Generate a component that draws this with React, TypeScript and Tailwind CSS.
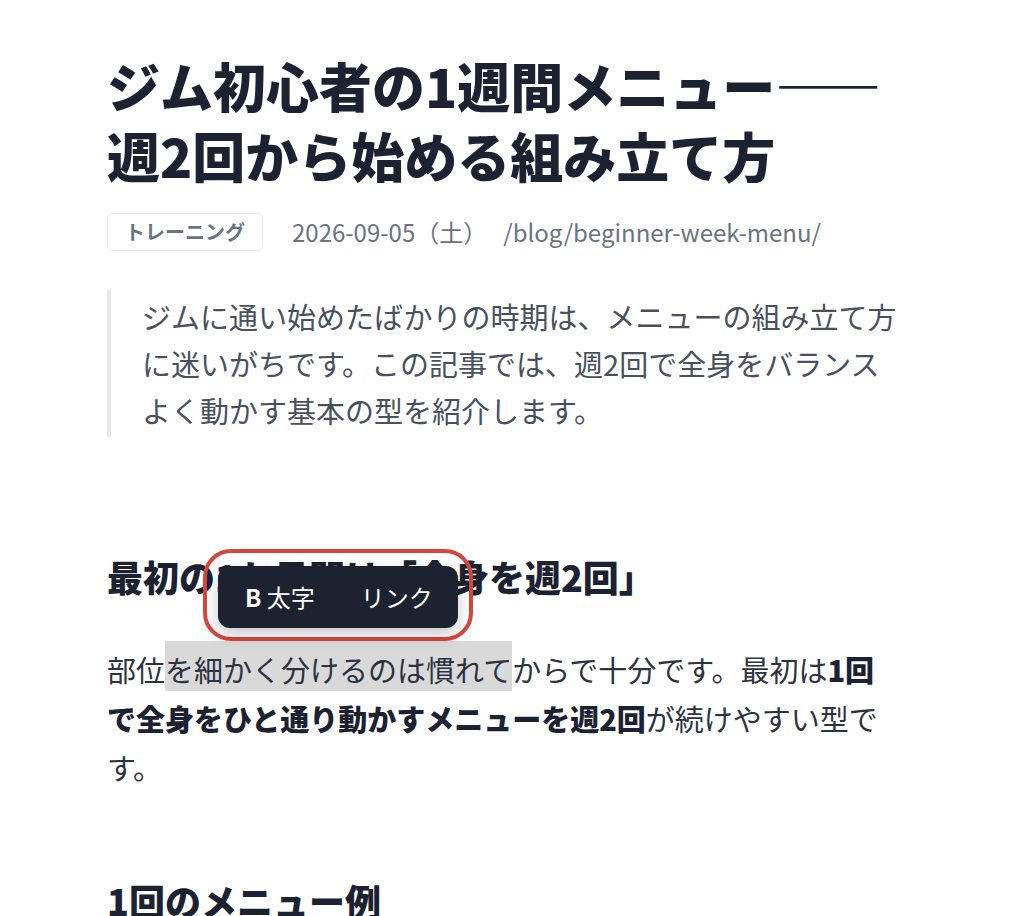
import React from 'react';

const jp = { fontFamily: '"Noto Sans CJK JP", "Noto Sans", sans-serif' };

const Toolbar = () => (
  <div className="absolute left-[218px] top-[566px]">
    {/* annotation ring */}
    <div className="absolute -left-[15px] -top-[17px] -right-[15px] -bottom-[13px] rounded-[28px] border-[4px] border-[#d8463b]" />
    <div className="relative flex h-[62px] w-[240px] items-center gap-[46px] rounded-[12px] bg-[#1c2230] pl-[27px] text-[24px] text-white shadow-[0_6px_16px_rgba(0,0,0,0.22)]">
      <span>
        <b className="font-bold">B</b> 太字
      </span>
      <span>リンク</span>
    </div>
  </div>
);

export default function App() {
  return (
    <div className="relative h-[916px] overflow-hidden bg-white" style={jp}>
      <article className="mx-auto w-[796px] pt-[50px]">
        <h1 className="text-[53px] font-black leading-[70px] text-[#1c2231]">
          ジム初心者の1週間メニュー――週2回から始める組み立て方
        </h1>

        <div className="mt-[23px] flex items-center text-[#6b7280]">
          <span className="rounded-[6px] border border-[#e5e7eb] px-[17px] py-[4px] text-[20px] font-bold leading-[28px]">
            トレーニング
          </span>
          <span className="ml-[29px] text-[24px]">2026-09-05（土）</span>
          <span className="ml-[16px] text-[24px]">/blog/beginner-week-menu/</span>
        </div>

        <blockquote className="mt-[39px] border-l-[4px] border-[#e5e7eb] py-[3px] pl-[31px] text-[29px] leading-[47px] text-[#4a5060]">
          ジムに通い始めたばかりの時期は、メニューの組み立て方に迷いがちです。この記事では、週2回で全身をバランスよく動かす基本の型を紹介します。
        </blockquote>

        <h2 className="mt-[115px] text-[36px] font-black leading-[48px] text-[#1c2231]">
          最初の1か月間は「全身を週2回」
        </h2>

        <p className="mt-[45px] text-[29px] leading-[49px] text-[#2d3340]">
          部位
          <span className="bg-[#d9d9d9] pt-[7px] pb-[1px]">を細かく分けるのは慣れて</span>
          からで十分です。最初は
          <strong className="font-black text-[#1c2231]">1回で全身をひと通り動かすメニューを週2回</strong>
          が続けやすい型です。
        </p>

        <h2 className="mt-[84px] text-[36px] font-black leading-[48px] text-[#1c2231]">
          1回のメニュー例
        </h2>
      </article>
      <Toolbar />
    </div>
  );
}
